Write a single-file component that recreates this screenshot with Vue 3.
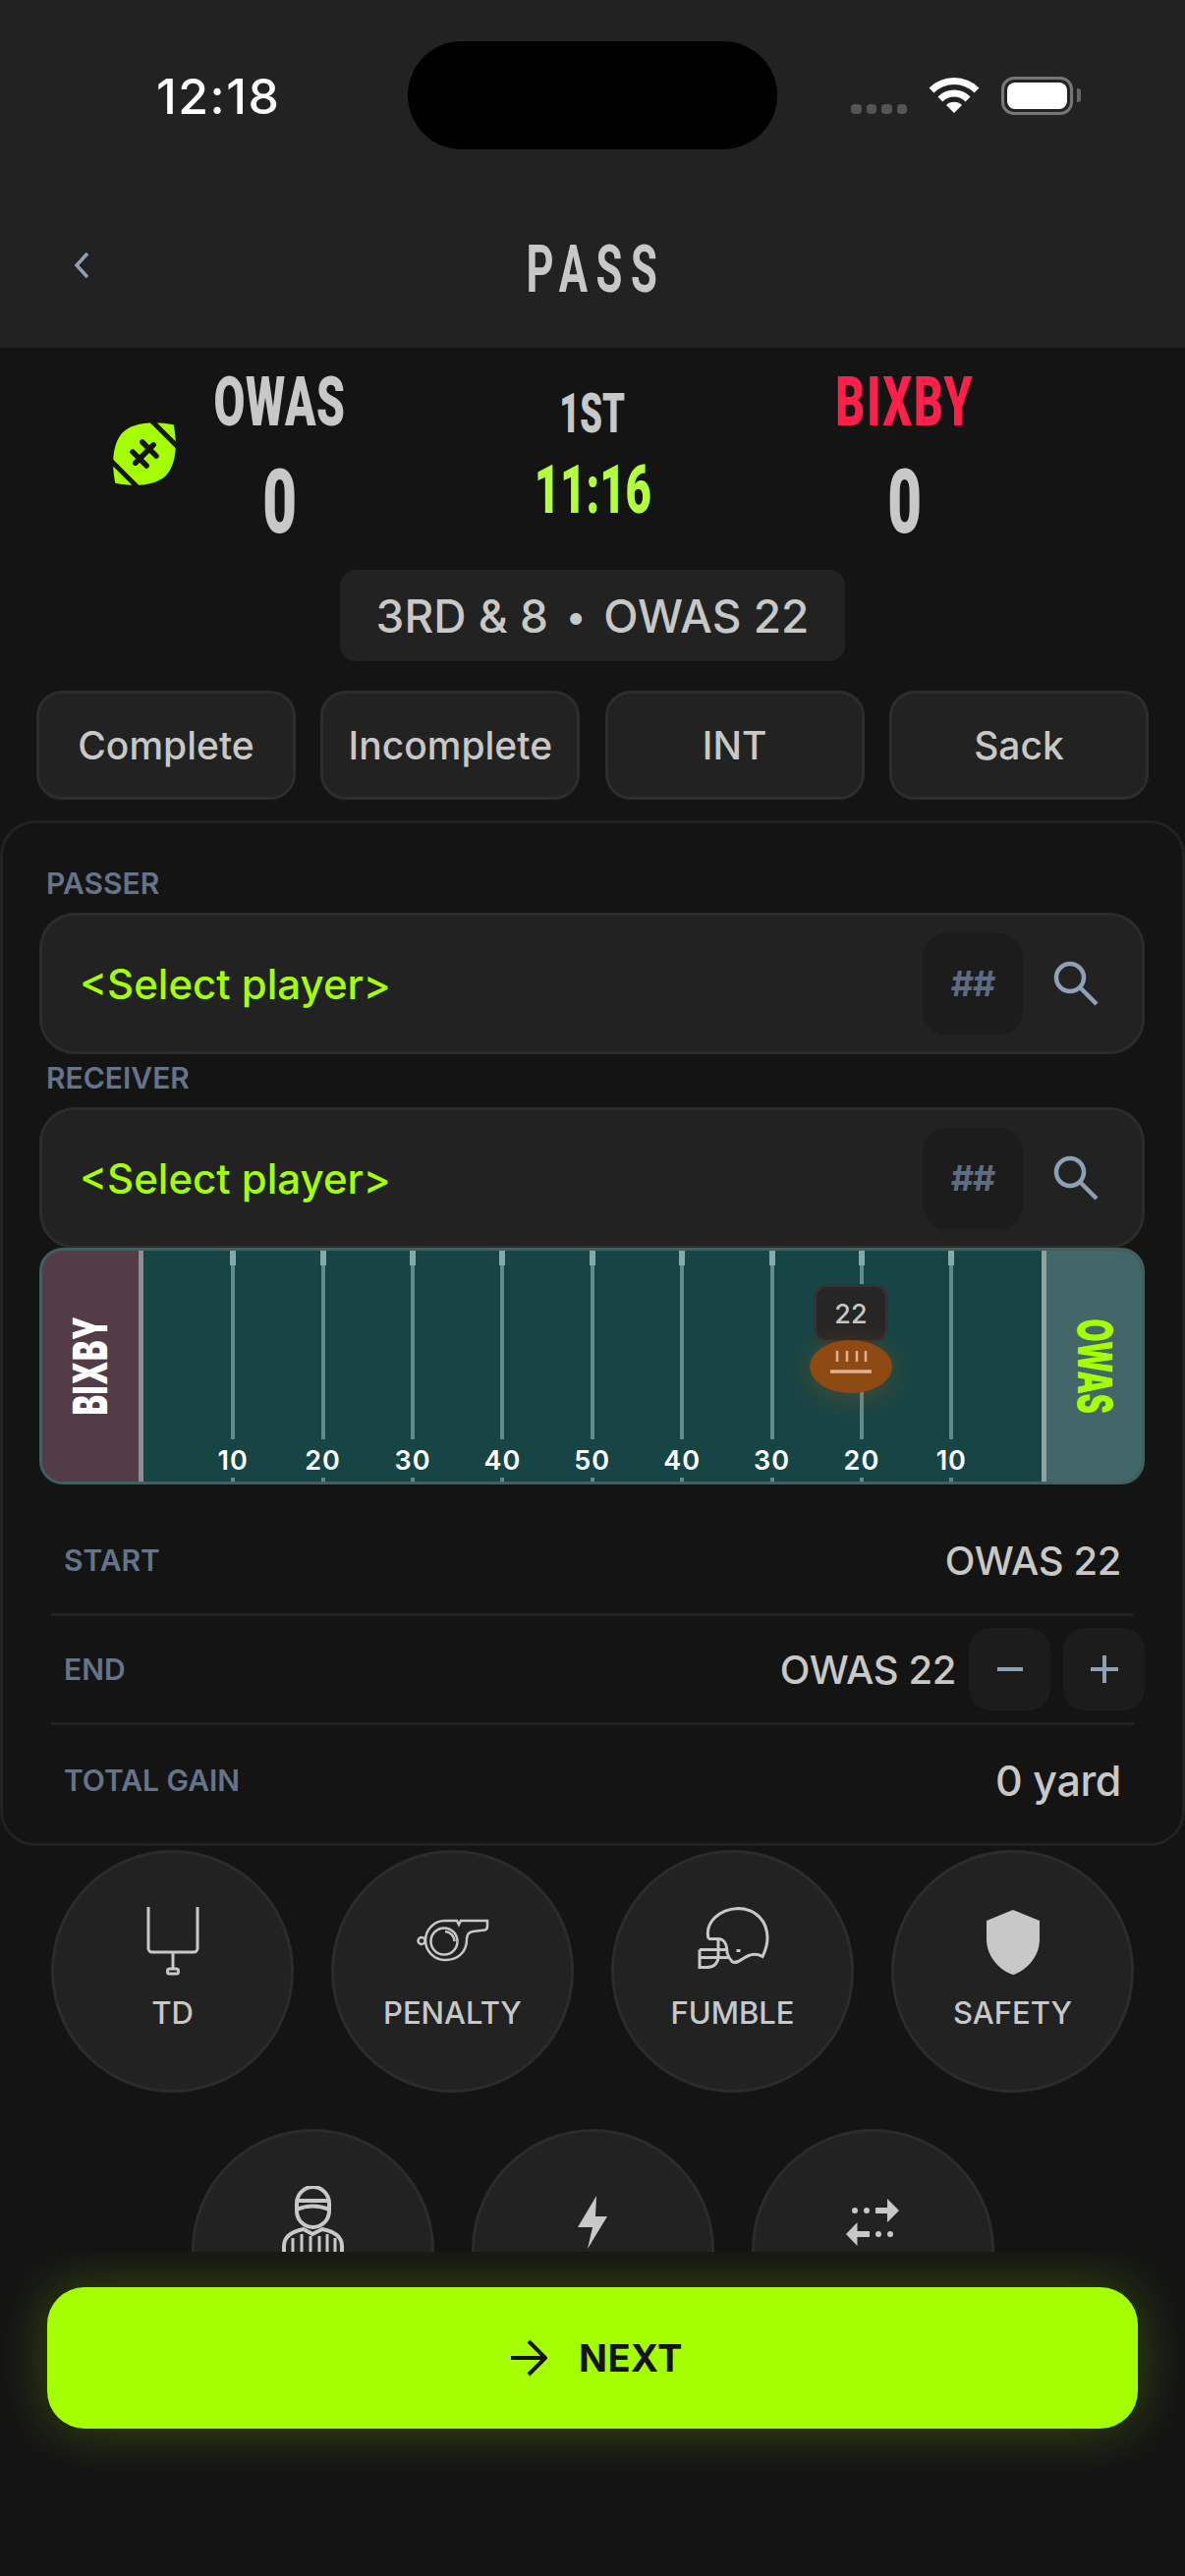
<script setup>
const plays = ['Complete', 'Incomplete', 'INT', 'Sack']
const pickers = ['PASSER', 'RECEIVER']
const yards = [10, 20, 30, 40, 50, 40, 30, 20, 10]
</script>

<template>
  <div class="screen">
    <header class="header">
      <div class="status">
        <span class="time">12:18</span>
        <div class="status-icons">
          <div class="signal"><i></i><i></i><i></i><i></i></div>
          <svg class="wifi" width="52" height="38" viewBox="0 0 52 38" fill="none" stroke="#fff">
            <path d="M3 14A32.5 32.5 0 0 1 49 14" stroke-width="7"/>
            <path d="M11.9 22.9A20 20 0 0 1 40.1 22.9" stroke-width="7"/>
            <path d="M26 37L18 29A11.5 11.5 0 0 1 34 29Z" fill="#fff" stroke="none"/>
          </svg>
          <div class="battery"><div class="battery-fill"></div></div>
          <div class="battery-nub"></div>
        </div>
      </div>
      <div class="island"></div>
      <div class="titlebar">
        <svg class="back" width="18" height="28" viewBox="0 0 18 28" fill="none" stroke="#8ea0b8" stroke-width="3.5">
          <path d="M15 2L4 14L15 26"/>
        </svg>
        <h1 class="title"><span class="cond">PASS</span></h1>
      </div>
    </header>

    <div class="scroll">
      <section class="score">
        <div class="team">
          <svg class="possession" width="68" height="68" viewBox="0 0 68 68">
            <g transform="rotate(-45 34 34)">
              <path d="M-8 34C6 13 22 3 34 3C46 3 62 13 76 34C62 55 46 65 34 65C22 65 6 55 -8 34Z" fill="#a6ff00"/>
              <g stroke="#141414" fill="none">
                <path d="M5 0V68M63 0V68" stroke-width="5"/>
                <path d="M21 34H47M27 24V44M41 24V44" stroke-width="5.500" stroke-linecap="round"/>
              </g>
            </g>
          </svg>
          <div class="team-name"><span class="cond">OWAS</span></div>
          <div class="points"><span class="cond">0</span></div>
        </div>
        <div class="clock">
          <div class="quarter"><span class="cond">1ST</span></div>
          <div class="time-left"><span class="cond">11:16</span></div>
        </div>
        <div class="team">
          <div class="team-name away"><span class="cond">BIXBY</span></div>
          <div class="points"><span class="cond">0</span></div>
        </div>
      </section>

      <div class="pill-row">
        <div class="pill">3RD &amp; 8<span class="bullet">•</span>OWAS 22</div>
      </div>

      <div class="plays">
        <div v-for="p in plays" :key="p" class="play">{{ p }}</div>
      </div>

      <section class="card">
        <div v-for="label in pickers" :key="label" class="picker">
          <div class="label">{{ label }}</div>
          <div class="input">
            <span class="placeholder">&lt;Select player&gt;</span>
            <div class="hash">##</div>
            <svg class="search" width="46" height="46" viewBox="0 0 46 46" fill="none" stroke="#8ea0b8" stroke-width="4.5">
              <circle cx="17" cy="17" r="14"/>
              <path d="M27 27L44 44"/>
            </svg>
          </div>
        </div>

        <div class="field">
          <div class="endzone left"><span class="ez-text">BIXBY</span></div>
          <div class="turf">
            <div v-for="(y, i) in yards" :key="i" class="yard">
              <i class="hash-mark"></i>
              <i class="yard-line"></i>
              <span class="yard-num">{{ y }}</span>
              <i class="tick"></i>
            </div>
            <div class="marker">
              <div class="marker-badge">22</div>
              <div class="ball">
                <svg width="44" height="26" viewBox="0 0 44 26" fill="none" stroke="#e0b28e">
                  <path d="M8 3V14M18 3V14M28 3V14M37 3V14" stroke-width="2.5"/>
                  <path d="M1 24H43" stroke-width="3.5"/>
                </svg>
              </div>
            </div>
          </div>
          <div class="endzone right"><span class="ez-text">OWAS</span></div>
        </div>

        <div class="rows">
          <div class="row">
            <span class="row-label">START</span>
            <span class="row-value">OWAS 22</span>
          </div>
          <div class="row">
            <span class="row-label">END</span>
            <div class="row-end">
              <span class="row-value">OWAS 22</span>
              <div class="step">
                <svg width="30" height="30" viewBox="0 0 30 30" stroke="#8ea0b8" stroke-width="4"><path d="M2 15H28"/></svg>
              </div>
              <div class="step">
                <svg width="30" height="30" viewBox="0 0 30 30" stroke="#8ea0b8" stroke-width="4"><path d="M1 15H29M15 1V29"/></svg>
              </div>
            </div>
          </div>
          <div class="row last">
            <span class="row-label">TOTAL GAIN</span>
            <span class="row-value gain">0 yard</span>
          </div>
        </div>
      </section>

      <section class="actions">
        <div class="action">
          <svg class="ico" width="54" height="70" viewBox="0 0 54 70" fill="none" stroke="#c8c8c8" stroke-width="3">
            <path d="M2 0V42a4 4 0 0 0 4 4H48a4 4 0 0 0 4-4V0"/>
            <path d="M27 46V63"/>
            <rect x="21.5" y="63" width="11" height="5" rx="2"/>
          </svg>
          <span class="action-label">TD</span>
        </div>
        <div class="action">
          <svg class="ico" width="78" height="70" viewBox="322 21 78 70" fill="none" stroke="#c8c8c8" stroke-width="2.5">
            <path d="M353 35H365l2 4 2-4H396V41q0 3-3 3.5L381 46q-6 1-6 8C375 67 366 75 353 75A20 20 0 0 1 353 35Z"/>
            <circle cx="352" cy="56" r="13.5"/>
            <path d="M353 46a10 10 0 0 1 9.5 10"/>
            <circle cx="329" cy="55.5" r="3.5"/>
          </svg>
          <span class="action-label">PENALTY</span>
        </div>
        <div class="action">
          <svg class="ico" width="76" height="70" viewBox="67 19.500 76 70" fill="none" stroke="#c8c8c8" stroke-width="3">
            <path d="M80 52C76 34 92 22 110 21C128 21 140 34 140 51C140 58 138 64 135 70C128 66 122 68 117 71C112 74 108 78 104 75C101 72 100 70 99 66C99 58 96 52 90 52H80"/>
            <path d="M71 63H100M71 63V81H79C86 81 90 76 90 70V52M71 71H102"/>
            <path d="M108.500 64H112.500" stroke-width="3"/>
          </svg>
          <span class="action-label">FUMBLE</span>
        </div>
        <div class="action">
          <svg class="ico" width="54" height="70" viewBox="0 -1 54 70" fill="#c8c8c8">
            <path d="M27 2L54 13V32C54 50 40 64 27 68C14 64 0 50 0 32V13Z"/>
          </svg>
          <span class="action-label">SAFETY</span>
        </div>
        <div class="action">
          <svg class="ico" width="63" height="70" viewBox="0 1 63 70" fill="none" stroke="#c8c8c8" stroke-width="4">
            <rect x="15" y="2" width="33" height="41" rx="16.500"/>
            <path d="M15 16H48M15 25Q31 18 48 25"/>
            <path d="M2 70V62C2 52 12 47 22 45L31 50L41 45C51 47 61 52 61 62V70"/>
            <path d="M11 54V70M20 50V70M29 52V70M38 52V70M46 50V70M54 54V70" stroke-width="3"/>
          </svg>
        </div>
        <div class="action">
          <svg class="ico" width="30" height="70" viewBox="0 -10 30 70" fill="#c8c8c8">
            <path d="M19 0L0 32H15L10 54L30 21H18Z"/>
          </svg>
        </div>
        <div class="action">
          <svg class="ico" width="54" height="70" viewBox="0 -13 54 70" fill="#c8c8c8">
            <path d="M54 12L42 0V9H30V15H42V24Z"/>
            <circle cx="9" cy="12" r="3"/><circle cx="21" cy="12" r="3"/>
            <path d="M0 36L11.500 24V33H24V39H11.500V48Z"/>
            <circle cx="33" cy="36" r="3"/><circle cx="45" cy="36" r="3"/>
          </svg>
        </div>
      </section>
    </div>

    <footer class="footer">
      <div class="next">
        <svg width="38" height="38" viewBox="0 0 38 38" fill="none" stroke="#141414" stroke-width="4">
          <path d="M1 19H34M19 2L36 19L19 36"/>
        </svg>
        <span>NEXT</span>
      </div>
    </footer>
  </div>
</template>

<style>
html, body { margin: 0; background: #141414; }
</style>

<style scoped>
.screen {
  position: relative;
  width: 1206px;
  height: 2622px;
  overflow: hidden;
  background: #141414;
  font-family: "Inter", "Liberation Sans", sans-serif;
  color: #c8c8c8;
}
.cond {
  display: inline-block;
  transform: scaleX(0.66);
  font-family: "Roboto", "Liberation Sans", sans-serif;
  font-weight: 900;
}
.header {
  height: 354px;
  background: #222;
  display: flex;
  flex-direction: column;
}
.status {
  height: 196px;
  display: flex;
  justify-content: space-between;
  padding: 68px 106px 0 159px;
  box-sizing: border-box;
}
.time {
  font-size: 50px;
  line-height: 60px;
  font-weight: 500;
  color: #fff;
  letter-spacing: 1.5px;
}
.status-icons {
  display: flex;
  align-items: flex-start;
  padding-top: 10px;
}
.signal {
  display: flex;
  gap: 5px;
  margin: 28px 22px 0 0;
}
.signal i {
  width: 10.500px;
  height: 10px;
  border-radius: 4px;
  background: #555;
}
.battery {
  width: 73px;
  height: 39px;
  margin-left: 22px;
  box-sizing: border-box;
  border: 3px solid #777;
  border-radius: 13px;
  padding: 3px;
}
.battery-fill {
  height: 100%;
  background: #fff;
  border-radius: 8px;
}
.battery-nub {
  width: 4px;
  height: 14px;
  margin: 12px 0 0 4px;
  background: #666;
  border-radius: 0 3px 3px 0;
}
.island {
  position: absolute;
  left: 415px;
  top: 42px;
  width: 376px;
  height: 110px;
  border-radius: 55px;
  background: #000;
}
.titlebar {
  position: relative;
  flex: 1;
  display: flex;
  align-items: center;
  justify-content: center;
  padding: 0 0 3px 6px;
  box-sizing: border-box;
}
.back {
  position: absolute;
  left: 74px;
  top: 60px;
}
.title {
  margin: 0;
  font-size: 66px;
  line-height: 70px;
  font-weight: 700;
  letter-spacing: 13px;
  color: #c8c8c8;
}
.title .cond {
  font-weight: 700;
  transform: scaleX(0.66);
}
.scroll {
  height: 1938px;
  overflow: hidden;
}
.score {
  display: flex;
  justify-content: center;
  padding-top: 19px;
}
.team {
  position: relative;
  width: 318px;
  text-align: center;
}
.possession {
  position: absolute;
  left: -13px;
  top: 55px;
}
.team-name {
  font-size: 70px;
  line-height: 70px;
  letter-spacing: 1px;
  color: #c8c8c8;
}
.team-name.away {
  color: #ff1f4b;
  letter-spacing: 3px;
}
.points {
  margin-top: 20px;
  font-size: 91px;
  line-height: 91px;
  letter-spacing: 2px;
}
.clock {
  width: 318px;
  text-align: center;
  padding-top: 20px;
}
.quarter {
  font-size: 55px;
  line-height: 55px;
  color: #c8c8c8;
}
.time-left {
  margin-top: 14px;
  font-size: 69px;
  line-height: 69px;
  color: #b4ff3c;
}
.pill-row {
  display: flex;
  justify-content: center;
  margin-top: 23px;
}
.pill {
  width: 514px;
  height: 93px;
  display: flex;
  align-items: center;
  justify-content: center;
  background: #222;
  border-radius: 16px;
  font-size: 46px;
  font-weight: 500;
}
.bullet {
  margin: 0 18px;
  font-size: 38px;
}
.plays {
  display: flex;
  justify-content: space-between;
  padding: 0 37px;
  margin-top: 30px;
}
.play {
  width: 264px;
  height: 111px;
  box-sizing: border-box;
  display: flex;
  align-items: center;
  justify-content: center;
  background: #222;
  border: 3px solid #2d2d2d;
  border-radius: 26px;
  font-size: 39px;
  font-weight: 500;
}
.card {
  margin-top: 21px;
  height: 1044px;
  box-sizing: border-box;
  border: 3px solid #222;
  border-radius: 36px;
  padding: 37px 38px 0 37px;
}
.label {
  height: 54px;
  padding-left: 7px;
  line-height: 48px;
  font-size: 30px;
  font-weight: 600;
  color: #64748b;
}
.input {
  height: 144px;
  box-sizing: border-box;
  display: flex;
  align-items: center;
  padding: 0 44px 0 38px;
  background: #222;
  border: 3px solid #2c2c2c;
  border-radius: 36px;
}
.placeholder {
  flex: 1;
  font-size: 42px;
  font-weight: 500;
  color: #a6ff00;
}
.hash {
  width: 102px;
  height: 103px;
  display: flex;
  align-items: center;
  justify-content: center;
  background: #1c1c1c;
  border-radius: 24px;
  font-size: 36px;
  font-weight: 700;
  color: #5e6c82;
  letter-spacing: -1px;
}
.search {
  margin-left: 31px;
}
.field {
  display: flex;
  height: 241px;
  margin-top: -1px;
  box-sizing: border-box;
  border: 3px solid #41605f;
  border-radius: 24px;
  overflow: hidden;
  background: #174545;
}
.endzone {
  flex: none;
  display: flex;
  align-items: center;
  justify-content: center;
  box-sizing: border-box;
}
.endzone.left {
  width: 103px;
  background: #533c48;
  border-right: 5px solid #8b8f92;
}
.endzone.right {
  width: 102px;
  background: #436768;
  border-left: 5px solid #8ba3a3;
}
.ez-text {
  writing-mode: vertical-rl;
  font-family: "Inter", "Liberation Sans", sans-serif;
  font-weight: 900;
  font-size: 48px;
  line-height: 48px;
  letter-spacing: 1px;
}
.left .ez-text {
  color: #fff;
  transform: rotate(180deg) scaleY(0.64);
}
.right .ez-text {
  color: #a6ff00;
  transform: scaleY(0.62);
}
.turf {
  position: relative;
  flex: 1;
  display: flex;
  padding-left: 45.500px;
}
.yard {
  width: 91.400px;
  display: flex;
  flex-direction: column;
  align-items: center;
}
.hash-mark {
  width: 6px;
  height: 15px;
  background: #86a9a9;
}
.yard-line {
  width: 4px;
  height: 177px;
  background: #5f8c8c;
}
.yard-num {
  height: 39px;
  line-height: 44px;
  font-size: 27px;
  font-weight: 600;
  color: #fff;
  letter-spacing: 1px;
}
.tick {
  width: 4px;
  height: 4px;
  background: #5f8c8c;
}
.marker {
  position: absolute;
  left: 678px;
  top: 34px;
  width: 84px;
  display: flex;
  flex-direction: column;
  align-items: center;
}
.marker-badge {
  position: relative;
  z-index: 1;
  width: 76px;
  height: 60px;
  box-sizing: border-box;
  display: flex;
  align-items: center;
  justify-content: center;
  background: #262626;
  border: 3px solid #333;
  border-radius: 14px;
  font-size: 27px;
  font-weight: 500;
}
.ball {
  position: relative;
  z-index: 2;
  margin-top: -3px;
  width: 84px;
  height: 54px;
  display: flex;
  justify-content: center;
  padding-top: 8px;
  box-sizing: border-box;
  border-radius: 50%;
  background: #8e4a12;
  box-shadow: 0 4px 30px rgba(180, 90, 20, 0.35);
}
.rows {
  margin: 23px 11px 0 12px;
}
.row {
  height: 111px;
  box-sizing: border-box;
  display: flex;
  align-items: center;
  justify-content: space-between;
  padding: 0 13px 0 13px;
  border-bottom: 3px solid #222;
}
.row.last {
  border-bottom: 0;
}
.row-label {
  font-size: 30px;
  font-weight: 600;
  color: #64748b;
}
.row-value {
  font-size: 40px;
  font-weight: 500;
  color: #c8c8c8;
  letter-spacing: -0.4px;
}
.row-value.gain {
  font-size: 43px;
}
.row-end {
  display: flex;
  align-items: center;
  gap: 13px;
  margin-right: -24px;
}
.step {
  width: 83px;
  height: 84px;
  display: flex;
  align-items: center;
  justify-content: center;
  background: #1c1c1c;
  border-radius: 22px;
}
.actions {
  display: flex;
  flex-wrap: wrap;
  justify-content: center;
  gap: 37px 38px;
  margin-top: 4px;
}
.action {
  width: 247px;
  height: 247px;
  box-sizing: border-box;
  display: flex;
  flex-direction: column;
  align-items: center;
  padding-top: 55px;
  background: #222;
  border: 3px solid #2c2c2c;
  border-radius: 50%;
}
.ico {
  height: 70px;
  flex: none;
}
.action-label {
  margin-top: 18px;
  font-size: 31px;
  line-height: 40px;
  font-weight: 500;
  color: #c8c8c8;
}
.footer {
  position: relative;
  height: 330px;
  overflow: hidden;
  padding: 36px 48px 0;
  box-sizing: border-box;
}
.next {
  height: 144px;
  display: flex;
  align-items: center;
  justify-content: center;
  gap: 32px;
  padding-left: 8px;
  background: #a6ff00;
  border-radius: 38px;
  box-shadow: 0 0 56px rgba(166, 255, 0, 0.25);
  font-size: 38px;
  font-weight: 700;
  color: #141414;
  letter-spacing: 0.5px;
}
</style>
